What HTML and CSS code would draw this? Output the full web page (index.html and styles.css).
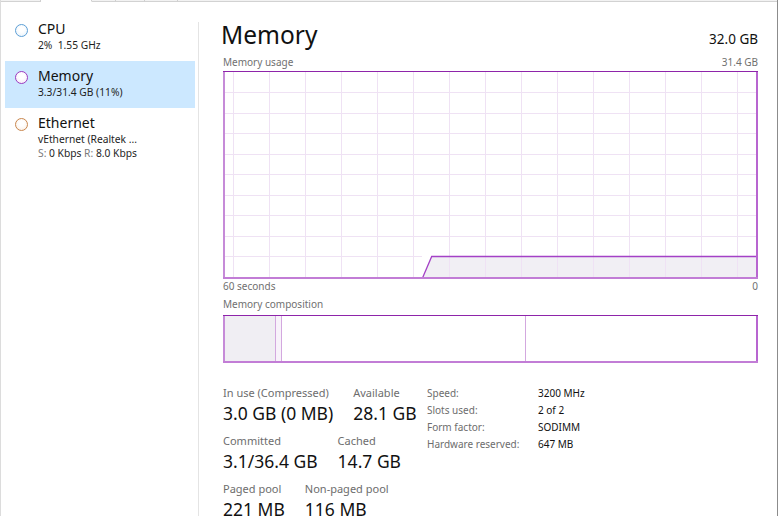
FILE: index.html
```html
<!DOCTYPE html>
<html>
<head>
<meta charset="utf-8">
<link rel="stylesheet" href="styles.css">
</head>
<body>
<div class="window">
  <div class="tabs">
    <span class="tab t1"></span><span class="tab t2 active"></span><span class="tab t3"></span><span class="tab t4"></span><span class="tab t5"></span><span class="tab rest"></span>
  </div>
  <div class="content">
    <aside class="sidebar">
      <div class="item">
        <span class="dot cpu"></span>
        <div class="txt">
          <div class="name">CPU</div>
          <div class="sub">2%&nbsp; 1.55 GHz</div>
        </div>
      </div>
      <div class="item selected">
        <span class="dot mem"></span>
        <div class="txt">
          <div class="name">Memory</div>
          <div class="sub">3.3/31.4 GB (11%)</div>
        </div>
      </div>
      <div class="item">
        <span class="dot eth"></span>
        <div class="txt">
          <div class="name">Ethernet</div>
          <div class="sub">vEthernet (Realtek ...</div>
          <div class="sub"><span class="g">S:</span> 0 Kbps <span class="g">R:</span> 8.0 Kbps</div>
        </div>
      </div>
    </aside>
    <div class="divider"></div>
    <main class="main">
      <div class="head">
        <h1>Memory</h1>
        <span class="total">32.0 GB</span>
      </div>
      <div class="cap cap-usage"><span>Memory usage</span><span>31.4 GB</span></div>
      <svg class="graph" width="535" height="208" viewBox="0 0 535 208">
        <polygon points="199.7,208 208.7,185.5 535,185.5 535,208" fill="#f1eff4"/>
        <path d="M10.5 0V208M46.5 0V208M82.5 0V208M118.5 0V208M154.5 0V208M190.5 0V208M226.5 0V208M262.5 0V208M298.5 0V208M334.5 0V208M370.5 0V208M406.5 0V208M442.5 0V208M478.5 0V208M514.5 0V208M0 21.5H535M0 42.5H535M0 62.5H535M0 83.5H535M0 103.5H535M0 124.5H535M0 144.5H535M0 165.5H535" stroke="#efe2f4" stroke-width="1" fill="none"/>
        <path d="M0 185.5H199" stroke="#efe2f4" stroke-width="1"/>
        <polyline points="199.5,207 208.7,185.5 534,185.5" fill="none" stroke="#a441c6" stroke-width="1.3"/>
        <rect x="0" y="0" width="2" height="208" fill="#c68bd8"/>
        <rect x="533" y="0" width="2" height="208" fill="#b865d0"/>
        <rect x="0" y="206" width="535" height="2" fill="#c27dd6"/>
        <rect x="0" y="0" width="535" height="1" fill="#8e24aa"/>
      </svg>
      <div class="cap cap-time"><span>60 seconds</span><span>0</span></div>
      <div class="cap cap-comp"><span>Memory composition</span></div>
      <svg class="comp" width="535" height="48" viewBox="0 0 535 48">
        <rect x="0" y="0" width="52" height="48" fill="#f0eef3"/>
        <rect x="53" y="0" width="5" height="48" fill="#f8f2fa"/>
        <path d="M52.5 0V48M58.5 0V48M302.5 0V48" stroke="#d3a8df" stroke-width="1"/>
        <rect x="0" y="0" width="2" height="48" fill="#c68bd8"/>
        <rect x="533" y="0" width="2" height="48" fill="#b865d0"/>
        <rect x="0" y="46" width="535" height="2" fill="#c27dd6"/>
        <rect x="0" y="0" width="535" height="1" fill="#8e24aa"/>
      </svg>
      <div class="stats">
        <div class="left">
          <div class="row">
            <div class="stat"><div class="lbl">In use (Compressed)</div><div class="val">3.0 GB (0 MB)</div></div>
            <div class="stat"><div class="lbl">Available</div><div class="val">28.1 GB</div></div>
          </div>
          <div class="row">
            <div class="stat"><div class="lbl">Committed</div><div class="val">3.1/36.4 GB</div></div>
            <div class="stat"><div class="lbl">Cached</div><div class="val">14.7 GB</div></div>
          </div>
          <div class="row">
            <div class="stat"><div class="lbl">Paged pool</div><div class="val">221 MB</div></div>
            <div class="stat"><div class="lbl">Non-paged pool</div><div class="val">116 MB</div></div>
          </div>
        </div>
        <dl class="spec">
          <dt>Speed:</dt><dd>3200 MHz</dd>
          <dt>Slots used:</dt><dd>2 of 2</dd>
          <dt>Form factor:</dt><dd>SODIMM</dd>
          <dt>Hardware reserved:</dt><dd>647 MB</dd>
        </dl>
      </div>
    </main>
  </div>
</div>
</body>
</html>
```
FILE: styles.css
```css
* { box-sizing: border-box; }
html, body { margin: 0; padding: 0; background: #fff; }
body {
  font-family: "Noto Sans", "Open Sans", sans-serif;
  color: #000;
}
.window {
  width: 778px;
  height: 516px;
  border-left: 1px solid #dcdcdc;
  border-right: 1px solid #8c8c8c;
  overflow: hidden;
  display: flex;
  flex-direction: column;
}
.tabs { display: flex; height: 2px; flex: none; }
.tab {
  height: 2px;
  background: #f2f2f2;
  border-bottom: 1px solid #d2d2d2;
  border-right: 1px solid #cfcfcf;
}
.t1 { width: 40px; }
.t2 { width: 51px; }
.t3 { width: 24px; }
.t4 { width: 29px; }
.t5 { width: 33px; }
.rest { flex: 1; border-right: none; }
.tab.active { background: #fff; border-bottom-color: #fff; }

.content { display: flex; flex: 1; min-height: 0; }
.sidebar { width: 197px; flex: none; padding-top: 12px; }
.divider { width: 1px; flex: none; background: #e4e4e4; margin-top: 20px; }
.main { flex: 1; min-width: 0; padding: 17px 19px 0 24px; }

.item {
  display: flex;
  align-items: flex-start;
  width: 190px;
  margin-left: 4px;
  padding: 5px 0 9px 10px;
}
.item.selected { background: #cce8ff; }
.dot {
  width: 13px;
  height: 13px;
  border-radius: 50%;
  border: 1px solid;
  flex: none;
  margin: 5px 10px 0 0;
}
.dot.cpu { border-color: #5d9fd6; background: radial-gradient(circle at 50% 40%, #ffffff 30%, #e3f0fa 100%); }
.dot.mem { border-color: #9c3cbf; background: radial-gradient(circle at 50% 40%, #ffffff 30%, #f3e4f8 100%); }
.dot.eth { border-color: #c9874e; background: radial-gradient(circle at 50% 40%, #ffffff 30%, #f9ece0 100%); }
.name { font-size: 14px; line-height: 19px; color: #111; }
.sub { font-size: 10.25px; line-height: 14px; color: #1e1e1e; }
.sub .g { color: #7a7a7a; }

.head {
  display: flex;
  justify-content: space-between;
  align-items: baseline;
}
.head h1 {
  margin: 0 0 0 -2px;
  font-size: 24.5px;
  font-weight: 400;
  line-height: 32px;
  color: #111;
}
.total { font-size: 13.5px; color: #111; }

.cap {
  display: flex;
  justify-content: space-between;
  font-size: 10px;
  line-height: 13px;
  color: #707070;
}
.cap-usage { margin-top: 5px; }
.graph { display: block; margin-top: 2px; }
.cap-time { margin-top: 1px; }
.cap-comp { margin-top: 5px; }
.comp { display: block; margin-top: 4px; }

.stats { display: flex; align-items: flex-start; margin-top: 22px; }
.left { width: 204px; flex: none; }
.row { display: flex; gap: 20px; margin-bottom: 7px; }
.lbl { font-size: 11px; line-height: 16px; color: #6d6d6d; white-space: nowrap; }
.val { font-size: 17.5px; line-height: 25px; color: #111; white-space: nowrap; }

.spec {
  margin: 0;
  display: grid;
  grid-template-columns: 111px auto;
  align-content: start;
  font-size: 10px;
  line-height: 17px;
}
.spec dt { color: #6d6d6d; }
.spec dd { margin: 0; color: #111; }
```
